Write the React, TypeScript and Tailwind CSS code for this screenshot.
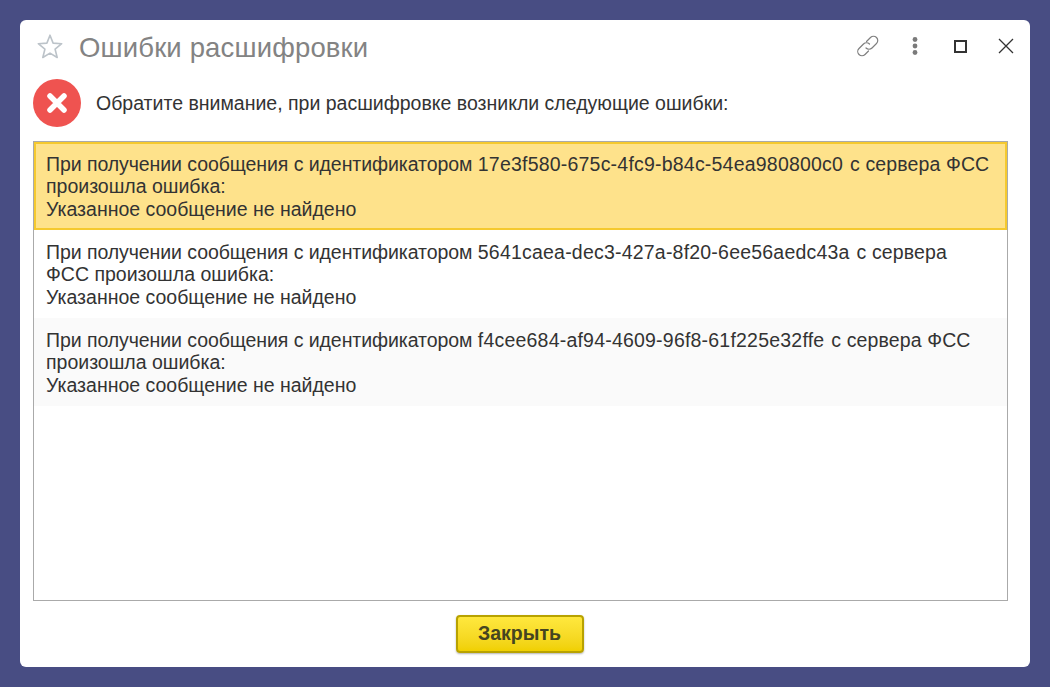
const rows = [
  {
    pre: "При получении сообщения с идентификатором",
    id: "17e3f580-675c-4fc9-b84c-54ea980800c0",
    post: "с сервера ФСС",
    next: "произошла ошибка:",
    cls: "bg-[#fee28b] border-2 border-[#f5c92f] px-[10px] pt-[9px] h-[88px]",
  },
  {
    pre: "При получении сообщения с идентификатором",
    id: "5641caea-dec3-427a-8f20-6ee56aedc43a",
    post: "с сервера",
    next: "ФСС произошла ошибка:",
    cls: "bg-white px-[12px] pt-[11px] h-[88px]",
  },
  {
    pre: "При получении сообщения с идентификатором",
    id: "f4cee684-af94-4609-96f8-61f225e32ffe",
    post: "с сервера ФСС",
    next: "произошла ошибка:",
    cls: "bg-[#fafafa] px-[12px] pt-[11px] h-[88px]",
  },
];

export default function App() {
  return (
    <div className="w-[1050px] h-[687px] bg-[#484d83] p-[20px] font-['Liberation_Sans',Arial,sans-serif]">
      <div className="w-[1010px] h-[647px] bg-white rounded-[6px] flex flex-col pl-[13px] pr-[22px]">
        {/* title bar */}
        <div className="flex items-center h-[56px] shrink-0">
          <svg width="28" height="28" viewBox="0 0 28 28" className="ml-[3px] mt-[-2px]" fill="none">
            <path d="M14 2.2l3.1 7.9 8.6.6-6.6 5.5 2.1 8.3L14 20.1l-7.2 4.4 2.1-8.3-6.6-5.5 8.6-.6z" stroke="#bcc3c9" strokeWidth="1.6" strokeLinejoin="round" />
          </svg>
          <div className="ml-[15px] text-[27.5px] leading-[32px] text-[#838383] mt-[-1px] tracking-[0.15px]">Ошибки расшифровки</div>
          <div className="ml-auto flex items-center mr-[-6px] mt-[-4px]">
            <svg width="26" height="26" viewBox="0 0 26 26" fill="none" stroke="#7f7f7f" strokeWidth="1.2" strokeLinecap="round">
              <path d="M11.5 8.5l4-4a4.2 4.2 0 0 1 6 6l-4.5 4.5a4.2 4.2 0 0 1-6 0" />
              <path d="M14.5 11a4.2 4.2 0 0 0-6 0L4 15.5a4.2 4.2 0 0 0 6 6l3.5-3.5" />
            </svg>
            <svg width="6" height="18" viewBox="0 0 6 18" className="ml-[31px]" fill="#7a7a7a">
              <circle cx="3" cy="2.5" r="2.4" />
              <circle cx="3" cy="9" r="2.4" />
              <circle cx="3" cy="15.5" r="2.4" />
            </svg>
            <div className="ml-[36px] w-[13px] h-[13px] border-2 border-[#333333]" />
            <svg width="16" height="16" viewBox="0 0 16 16" className="ml-[31px]" fill="none" stroke="#333333" strokeWidth="1.3">
              <path d="M1 1l14 14M15 1L1 15" />
            </svg>
          </div>
        </div>

        {/* message */}
        <div className="flex items-center h-[48px] shrink-0 mt-[3px]">
          <svg width="48" height="48" viewBox="0 0 48 48" className="shrink-0">
            <circle cx="24" cy="24" r="24" fill="#ef5350" />
            <path d="M17 17l14 14M31 17L17 31" stroke="#ffffff" strokeWidth="5.5" strokeLinecap="round" />
          </svg>
          <div className="ml-[15px] text-[19.5px] leading-[22px] text-[#333333] mt-[-1px]">
            Обратите внимание, при расшифровке возникли следующие ошибки:
          </div>
        </div>

        {/* error list */}
        <div className="mt-[14px] h-[460px] border border-[#aaaaaa] shrink-0">
          {rows.map((r) => (
            <div key={r.id} className={r.cls + " text-[19.5px] leading-[22.4px] text-[#333333]"}>
              <div className="whitespace-nowrap">
                <span className="tracking-[-0.07px]">{r.pre}</span>{" "}
                <span className="tracking-[0.21px]">{r.id}</span>{" "}
                <span className="ml-[1.5px] tracking-[0.12px]">{r.post}</span>
              </div>
              <div className="whitespace-nowrap">{r.next}</div>
              <div className="whitespace-nowrap">Указанное сообщение не найдено</div>
            </div>
          ))}
        </div>

        {/* footer */}
        <div className="flex justify-center mt-[14px] ml-[-2px]">
          <button className="w-[128px] h-[38px] rounded-[4px] border-2 border-[#b8a200] bg-gradient-to-b from-[#ffe83d] to-[#f0d000] shadow-[0_1px_2px_rgba(0,0,0,0.3)] text-[19.5px] font-bold text-[#454520]">
            Закрыть
          </button>
        </div>
      </div>
    </div>
  );
}
